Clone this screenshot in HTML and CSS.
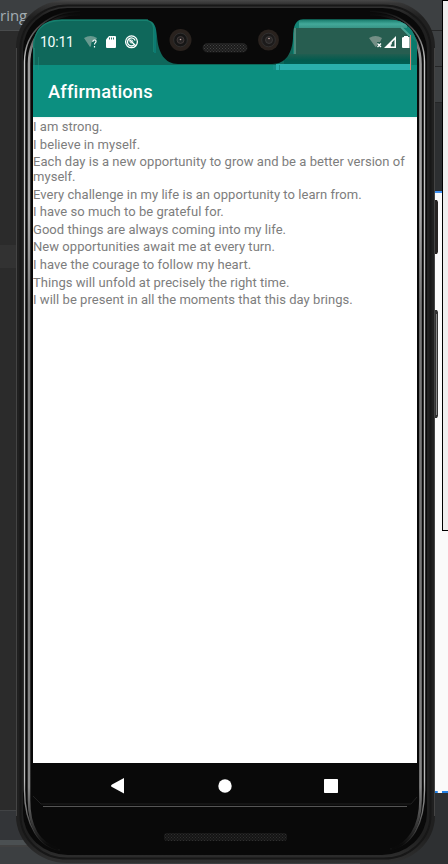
FILE: index.html
```html
<!DOCTYPE html>
<html lang="en">
<head>
<meta charset="utf-8">
<title>Affirmations</title>
<link rel="stylesheet" href="styles.css">
</head>
<body>
<div class="desktop">
  <div class="editor">
    <div class="editor-tab">ring</div>
    <div class="editor-body"></div>
    <div class="editor-line"></div>
    <div class="editor-body rest"></div>
    <div class="editor-tools"></div>
    <div class="editor-edge"></div>
    <div class="editor-foot"></div>
  </div>
  <div class="panel">
    <div class="panel-row"></div>
    <div class="panel-row"></div>
    <div class="panel-row"></div>
    <div class="panel-dark"></div>
    <div class="panel-page"></div>
    <div class="panel-foot"></div>
  </div>
  <div class="popup"></div>
</div>

<div class="phone">
  <svg class="frame" width="448" height="864" viewBox="0 0 448 864">
    <defs>
      <linearGradient id="body" x1="0" x2="0" y1="0" y2="1">
        <stop offset="0" stop-color="#484848"/><stop offset=".004" stop-color="#353535"/><stop offset=".02" stop-color="#202020"/><stop offset=".97" stop-color="#202020"/><stop offset="1" stop-color="#303030"/>
      </linearGradient>
      <linearGradient id="shine" gradientUnits="userSpaceOnUse" x1="0" x2="0" y1="14" y2="845">
        <stop offset="0" stop-color="#0a0a0a"/><stop offset=".05" stop-color="#999"/><stop offset=".24" stop-color="#aaa"/><stop offset=".35" stop-color="#777"/><stop offset=".7" stop-color="#777"/><stop offset=".93" stop-color="#888"/><stop offset="1" stop-color="#0a0a0a"/>
      </linearGradient>
      <linearGradient id="rim" gradientUnits="userSpaceOnUse" x1="0" x2="0" y1="10" y2="848">
        <stop offset="0" stop-color="#090909"/><stop offset=".06" stop-color="#c8c8c8"/><stop offset=".92" stop-color="#bbb"/><stop offset="1" stop-color="#111"/>
      </linearGradient>
      <pattern id="mesh" width="3" height="3" patternUnits="userSpaceOnUse"><rect width="3" height="3" fill="#1b1b1b"/><path d="M0 0h1v1H0zM1.500 1.500h1v1h-1z" fill="#444"/></pattern>
    </defs>
    <path d="M434 200h3l1 2v50l-1 2h-3z" fill="#262322"/>
    <path d="M434 310h3l1 2v104l-1 2h-3z" fill="#333"/>
    <path d="M436.500 314v101" stroke="#888"/>
    <rect x="16" y="0" width="419" height="863" rx="51" ry="47" fill="url(#body)"/>
    <path d="M16.500 48V816M434.500 48V816" stroke="#444"/>
    <rect x="20.500" y="5.500" width="410" height="853" rx="47" ry="43" fill="none" stroke="#171717" stroke-width="2"/>
    <rect x="23" y="8" width="404" height="847" rx="45" ry="42" fill="#090909"/>
    <path d="M80 11C50 12 24.500 30 24.500 62V790C24.500 826 40 848 60 850M370 11C400 12 424.500 30 424.500 62V790C424.500 824 412 846 390 849" fill="none" stroke="url(#rim)" stroke-width="1.400"/>
    <path d="M80 14C50 14 29 34 29 64V800C29 828 40 844 58 849M370 14C400 14 420.500 34 420.500 64V800C420.500 828 408 844 392 849" fill="none" stroke="url(#shine)" stroke-width="2.600"/>
    <path d="M31 117H33V770H31zM417 117H419V770H417z" fill="#080808"/>
    <path d="M33 796L41 804H411L417 797" fill="none" stroke="#202020"/>
    <path d="M43 806.500H407" stroke="#555"/>
    <rect x="164" y="833" width="123" height="8" rx="3" fill="url(#mesh)" opacity=".65"/>
  </svg>

  <div class="screen">
    <header class="status">
      <svg class="status-art" width="384" height="51" viewBox="33 19 384 51">
        <defs>
          <clipPath id="glass"><path d="M33 70V49C33 31 42 19.500 62 19.500H388C406 19.500 417 31 417 49V70Z"/></clipPath>
          <linearGradient id="glow" x1="0" x2="0" y1="0" y2="1"><stop offset="0" stop-color="#1d7f70"/><stop offset=".5" stop-color="#43a99a"/><stop offset="1" stop-color="#399486"/></linearGradient>
          <linearGradient id="deep" x1="0" x2="0" y1="0" y2="1"><stop offset="0" stop-color="#205e50"/><stop offset=".6" stop-color="#005b4f"/><stop offset="1" stop-color="#006156"/></linearGradient>
        </defs>
        <g clip-path="url(#glass)">
          <rect x="33" y="19" width="384" height="46" fill="#0f685b"/>
          <rect x="33" y="65" width="384" height="5" fill="#0c8f80"/>
          <path d="M33 48h2v22h-2zM38 57h1v13h-1z" fill="#258f80" opacity=".5"/>
          <path d="M33 49C33 31 42 20 62 20H146Q153 20 154 28V52" fill="none" stroke="#16806f" stroke-width="2"/>
          <path d="M154 25h2v28h-2z" fill="#0b7b72"/>
          <rect x="293" y="19" width="124" height="46" fill="#138273"/>
          <rect x="299" y="20" width="108" height="8" fill="url(#glow)"/>
          <path d="M296 28H402L410 37V54H296z" fill="#275d50"/>
          <path d="M294 28h2v26h-2z" fill="#4a897b"/>
          <rect x="284" y="54" width="126" height="11" fill="url(#deep)"/>
          <rect x="276" y="64" width="134" height="6" fill="#29afac"/>
          <path d="M273 65h3v5h-3zM279 65h1v5h-1z" fill="#168f87"/>
          <path d="M401 27L410 36" stroke="#4aa293" stroke-width="2"/>
          <path d="M412 38v27h5V43z" fill="#08796b"/>
          <path d="M410.500 35V70" stroke="#d88774"/>
        </g>
        <path d="M148 18V20C155 22 156 27 157 36C158 53 165 64 178 64H272C286 64 292 53 293 38C293 25 296 20 303 19V18z" fill="#090909"/>
        <g>
          <circle cx="180.500" cy="40" r="11" fill="#29221e"/><circle cx="180.500" cy="40" r="6.800" fill="#151515" stroke="#333" stroke-width=".8"/><circle cx="180.500" cy="40" r="3.500" fill="#262424" stroke="#4d4444" stroke-width=".7"/><circle cx="180.500" cy="39.500" r=".8" fill="#c5aaa5"/>
          <circle cx="268.500" cy="40" r="10.500" fill="#29221e"/><circle cx="268.500" cy="40" r="6.800" fill="#1c1a1a" stroke="#333" stroke-width=".8"/><circle cx="269" cy="40" r="3.500" fill="#292626" stroke="#444" stroke-width=".7"/><circle cx="269" cy="38.500" r=".8" fill="#c5aaa5"/>
          <rect x="203" y="43.500" width="44" height="8.500" rx="4.200" fill="url(#mesh)" stroke="#292929" stroke-width=".6"/>
        </g>
        <path d="M84 38Q90.500 34 97 38L96 40Q91 39 91 46L90 47z" fill="#67998f"/>
        <path d="M92.700 41.800Q93 40 94.500 40Q96.200 40 96 41.600C95.800 43 94.500 42.900 94.500 44.500M94.500 46v1.500" fill="none" stroke="#fff" stroke-width="1.200"/>
        <path d="M109 36H115Q116 36 116 37V47Q116 48 115 48H107Q106 48 106 47V39.500z" fill="#fff"/>
        <path d="M109.500 37.500v2M111.500 37.500v2M113.500 37.500v2" stroke="#0f685b" stroke-width=".9"/>
        <circle cx="131.500" cy="41.800" r="5.900" fill="none" stroke="#fff" stroke-width="1.300"/>
        <path d="M134 45.100A4 4 0 1 1 135.200 40.500M129.500 39.800L136 46" fill="none" stroke="#fff" stroke-width="1.300"/>
        <circle cx="131.300" cy="41.500" r="1.500" fill="none" stroke="#fff" stroke-width=".9"/>
        <path d="M369 38Q375.500 34 382 38L380 42H377V46L375.500 47z" fill="#748f86"/>
        <path d="M377.500 43.500l3.500 3.500M381 43.500l-3.500 3.500" stroke="#fff" stroke-width="1.300"/>
        <path d="M384 48L396 36V48zM390.800 44.500V46.500H394.500V39.800L391.800 42.500V44.500z" fill="#fff" fill-rule="evenodd"/>
        <path d="M404 36h4v1h1.500v11H403Q402 48 402 47V38Q402 37 404 37z" fill="#fff"/>
      </svg>
      <span class="clock">10:11</span>
    </header>
    <div class="app-bar"><h1>Affirmations</h1></div>
    <main class="list">
      <p>I am strong.</p>
      <p>I believe in myself.</p>
      <p>Each day is a new opportunity to grow and be a better version of myself.</p>
      <p>Every challenge in my life is an opportunity to learn from.</p>
      <p>I have so much to be grateful for.</p>
      <p>Good things are always coming into my life.</p>
      <p>New opportunities await me at every turn.</p>
      <p>I have the courage to follow my heart.</p>
      <p>Things will unfold at precisely the right time.</p>
      <p>I will be present in all the moments that this day brings.</p>
    </main>
    <nav class="nav">
      <svg width="14" height="16" viewBox="0 0 14 16"><path d="M0 8Q0 7 1 6.500L13 0V15.500L1 9Q0 8.500 0 8z" fill="#fff"/></svg>
      <svg width="14" height="14" viewBox="0 0 14 14"><circle cx="7" cy="7" r="6.700" fill="#fff"/></svg>
      <svg width="14" height="14" viewBox="0 0 14 14"><rect width="14" height="14" rx=".7" fill="#fff"/></svg>
    </nav>
  </div>
</div>
</body>
</html>
```
FILE: styles.css
```css
* { box-sizing: border-box; }
body {
  margin: 0;
  width: 448px;
  height: 864px;
  overflow: hidden;
  position: relative;
  font-family: Roboto, "Liberation Sans", sans-serif;
}
.desktop {
  display: grid;
  grid-template-columns: 32px 1fr;
  height: 864px;
  background: #3c3f41;
}
.editor, .panel { display: flex; flex-direction: column; }
.editor { width: 80px; }
.editor-tab {
  height: 31px;
  border-bottom: 1px solid #494b4c;
  background: #3c3f41;
  color: #a3adb3;
  font: 15px/30px "Open Sans", sans-serif;
}
.editor-body { height: 214px; background: #2b2b2b; }
.editor-line { height: 23px; background: #323232; }
.editor-body.rest { height: 542px; }
.editor-tools { height: 30px; background: #333538; border-top: 1px solid #414345; }
.editor-edge { height: 7px; background: #4b5052; border-bottom: 2px solid #414141; }
.editor-foot { flex: 1; background: #3c3f41; }
.panel { z-index: 0; margin-left: 328px; }
.panel-row { height: 36px; background: #3d4042; border-bottom: 1px solid #252627; }
.panel-row:first-child { height: 31px; }
.panel-dark { height: 88px; background: #2d2f31; }
.panel-page { height: 602px; background: #fafafa; border-top: 2px solid #3e91f2; border-bottom: 2px dashed #2483e8; }
.panel-foot { flex: 1; background: #2e3032; }
.popup {
  position: absolute;
  z-index: 1;
  left: 442px;
  top: 0;
  width: 20px;
  height: 531px;
  border: 1px solid #000;
  background: #f0eeee;
}
.phone {
  position: absolute;
  z-index: 2;
  inset: 0;
  padding: 19px 31px 0 33px;
}
.frame { position: absolute; left: 0; top: 0; }
.screen { position: relative; display: flex; flex-direction: column; width: 384px; }
.status { height: 46px; padding: 15px 0 0 7px; position: relative; }
.status-art { position: absolute; z-index: 1; left: 0; top: 0; }
.clock { position: relative; z-index: 2; display: block; color: #f4fffc; font-size: 14px; line-height: 16px; letter-spacing: -.25px; }
.app-bar { height: 52px; padding: 1px 15px 0; display: flex; align-items: center; background: #0c8f80; }
h1 { margin: 0; color: #fff; font-size: 18.300px; font-weight: 500; line-height: 24px; letter-spacing: .18px; }
.list {
  height: 646px;
  padding-top: 2px;
  background: linear-gradient(#edf5f4, #fff 2px);
  background-repeat: no-repeat;
  color: #7d7d7d;
  font-size: 13px;
  line-height: 15.200px;
  letter-spacing: .045px;
}
.list p { margin: 0 0 2.350px; }
.nav {
  height: 45px;
  padding: 0 79px 0 78px;
  display: flex;
  align-items: center;
  justify-content: space-between;
}
```
